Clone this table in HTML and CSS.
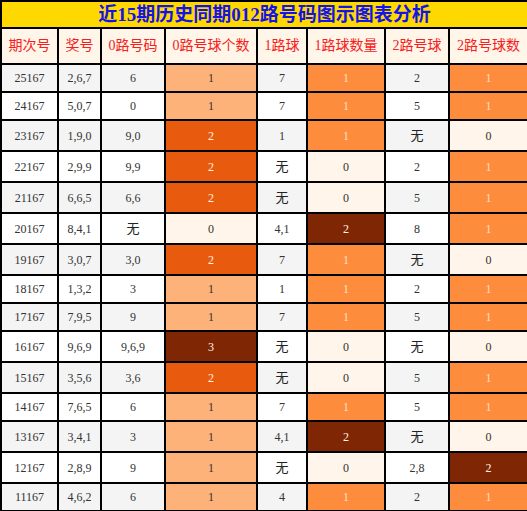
FILE: index.html
```html
<!DOCTYPE html>
<html>
<head>
    <meta charset="utf-8">
    <link rel="stylesheet" href="styles.css">
    <title>近15期历史同期012路号码图示图表分析</title>
</head>
<body>
    <table class="chart">
        <colgroup>
            <col class="w57"><col class="w43"><col class="w64"><col class="w92">
            <col class="w50"><col class="w78"><col class="w64"><col class="w79">
        </colgroup>
        <tr class="title-row">
            <td colspan="8" class="title">近15期历史同期012路号码图示图表分析</td>
        </tr>
        <tr class="head">
            <td>期次号</td><td>奖号</td><td>0路号码</td><td>0路号球个数</td>
            <td>1路球</td><td>1路球数量</td><td>2路号球</td><td>2路号球数</td>
        </tr>
        <tr class="odd">
            <td>25167</td><td>2,6,7</td><td>6</td><td class="a1">1</td>
            <td>7</td><td class="b1">1</td><td>2</td><td class="b1">1</td>
        </tr>
        <tr>
            <td>24167</td><td>5,0,7</td><td>0</td><td class="a1">1</td>
            <td>7</td><td class="b1">1</td><td>5</td><td class="b1">1</td>
        </tr>
        <tr class="odd tall">
            <td>23167</td><td>1,9,0</td><td>9,0</td><td class="a2">2</td>
            <td>1</td><td class="b1">1</td><td><span class="none">无</span></td><td class="z">0</td>
        </tr>
        <tr class="tall">
            <td>22167</td><td>2,9,9</td><td>9,9</td><td class="a2">2</td>
            <td><span class="none">无</span></td><td class="z">0</td><td>2</td><td class="b1">1</td>
        </tr>
        <tr class="odd tall">
            <td>21167</td><td>6,6,5</td><td>6,6</td><td class="a2">2</td>
            <td><span class="none">无</span></td><td class="z">0</td><td>5</td><td class="b1">1</td>
        </tr>
        <tr class="tall">
            <td>20167</td><td>8,4,1</td><td><span class="none">无</span></td><td class="z">0</td>
            <td>4,1</td><td class="b2">2</td><td>8</td><td class="b1">1</td>
        </tr>
        <tr class="odd tall">
            <td>19167</td><td>3,0,7</td><td>3,0</td><td class="a2">2</td>
            <td>7</td><td class="b1">1</td><td><span class="none">无</span></td><td class="z">0</td>
        </tr>
        <tr>
            <td>18167</td><td>1,3,2</td><td>3</td><td class="a1">1</td>
            <td>1</td><td class="b1">1</td><td>2</td><td class="b1">1</td>
        </tr>
        <tr class="odd">
            <td>17167</td><td>7,9,5</td><td>9</td><td class="a1">1</td>
            <td>7</td><td class="b1">1</td><td>5</td><td class="b1">1</td>
        </tr>
        <tr class="tall">
            <td>16167</td><td>9,6,9</td><td>9,6,9</td><td class="b2">3</td>
            <td><span class="none">无</span></td><td class="z">0</td><td><span class="none">无</span></td><td class="z">0</td>
        </tr>
        <tr class="odd tall">
            <td>15167</td><td>3,5,6</td><td>3,6</td><td class="a2">2</td>
            <td><span class="none">无</span></td><td class="z">0</td><td>5</td><td class="b1">1</td>
        </tr>
        <tr>
            <td>14167</td><td>7,6,5</td><td>6</td><td class="a1">1</td>
            <td>7</td><td class="b1">1</td><td>5</td><td class="b1">1</td>
        </tr>
        <tr class="odd tall">
            <td>13167</td><td>3,4,1</td><td>3</td><td class="a1">1</td>
            <td>4,1</td><td class="b2">2</td><td><span class="none">无</span></td><td class="z">0</td>
        </tr>
        <tr class="tall">
            <td>12167</td><td>2,8,9</td><td>9</td><td class="a1">1</td>
            <td><span class="none">无</span></td><td class="z">0</td><td>2,8</td><td class="b2">2</td>
        </tr>
        <tr class="odd">
            <td>11167</td><td>4,6,2</td><td>6</td><td class="a1">1</td>
            <td>4</td><td class="b1">1</td><td>2</td><td class="b1">1</td>
        </tr>
    </table>
</body>
</html>
```

FILE: styles.css
```css
body {
    margin: 0;
    background-color: white;
    font-family: "Liberation Serif", "Noto Sans CJK SC", serif;
}
.chart {
    border-collapse: collapse;
    table-layout: fixed;
    width: 527px;
}
.w57 { width: 57px; }
.w43 { width: 43px; }
.w64 { width: 64px; }
.w92 { width: 92px; }
.w50 { width: 50px; }
.w78 { width: 78px; }
.w79 { width: 79px; }
.chart td {
    border: 2px solid #000;
    padding: 0;
    text-align: center;
    font-size: 12px;
    line-height: 16px;
    color: #333;
    background-color: #fff;
}
.chart tr {
    height: 28px;
}
.chart tr.tall {
    height: 31px;
}
.chart tr.odd td {
    background-color: #f4f4f4;
}
.chart tr.title-row {
    height: 27px;
}
.chart td.title {
    background-color: #ffd800;
    color: #1414e6;
    font-family: "Liberation Serif", "Noto Sans CJK SC", serif;
    font-size: 19px;
    font-weight: bold;
    line-height: 22px;
}
.chart tr.head {
    height: 36px;
}
.chart tr.head td {
    background-color: #fff5e8;
    color: #f52020;
    font-size: 14px;
}
.none {
    font-family: "Noto Sans CJK SC", sans-serif;
    font-size: 13px;
    color: #222;
}
.chart tr td.z {
    background-color: #fff5eb;
}
.chart tr td.a1 {
    background-color: #fdb27a;
}
.chart tr td.a2 {
    background-color: #e85a0e;
    color: #fff3e6;
}
.chart tr td.b1 {
    background-color: #fd8d3c;
    color: #fddfc4;
}
.chart tr td.b2 {
    background-color: #7f2704;
    color: #fff3e6;
}
```
